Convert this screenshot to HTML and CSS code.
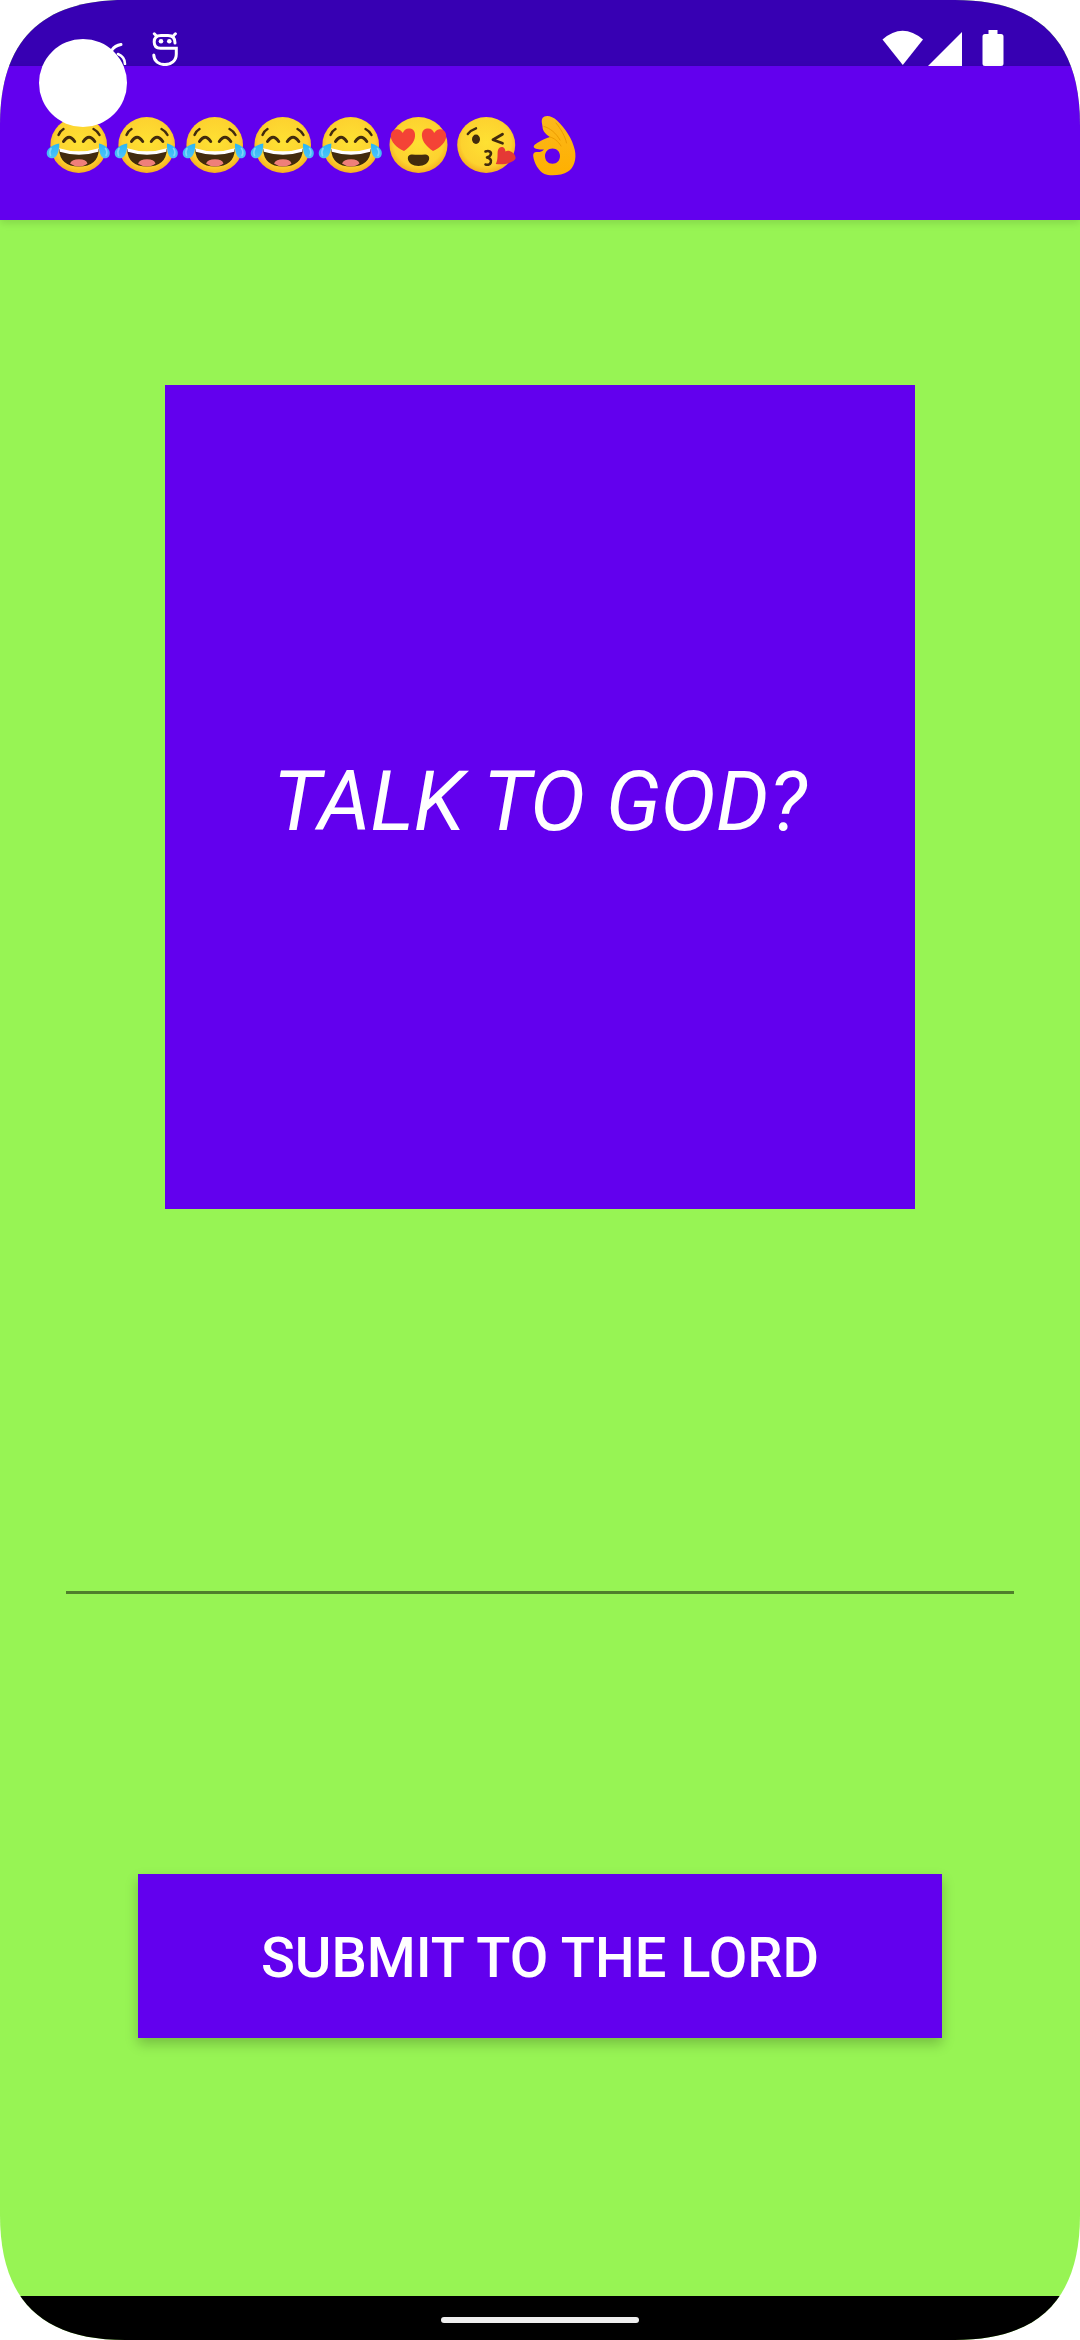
FILE: index.html
```html
<!DOCTYPE html>
<html lang="en">
<head>
<meta charset="utf-8">
<title>Talk to God</title>
<link rel="stylesheet" href="styles.css">
</head>
<body>
<svg class="defs" width="0" height="0" aria-hidden="true">
  <defs>
    <radialGradient id="faceFill" cx="50%" cy="45%" r="55%">
      <stop offset="0" stop-color="#fee133"/>
      <stop offset="0.78" stop-color="#fdd22f"/>
      <stop offset="1" stop-color="#f5ae20"/>
    </radialGradient>
    <linearGradient id="tearFill" x1="0" y1="0" x2="0" y2="1">
      <stop offset="0" stop-color="#29b6f6"/>
      <stop offset="1" stop-color="#4fc3f7"/>
    </linearGradient>
    <linearGradient id="handFill" x1="0" y1="0" x2="0" y2="1">
      <stop offset="0" stop-color="#fbb81c"/>
      <stop offset="1" stop-color="#ffb000"/>
    </linearGradient>
    <symbol id="e-laugh" viewBox="0 0 68 68">
      <ellipse cx="34.7" cy="34" rx="28.3" ry="28" fill="url(#faceFill)"/>
      <path d="M14.5 24 Q16 20 19.5 18M55.5 24 Q53.5 20 49.5 18" fill="none" stroke="#422b0d" stroke-width="2.4" stroke-linecap="round"/>
      <path d="M19.5 30.5 Q25 22 30.7 30.5M39.3 30.5 Q45 22 50.8 30.5" fill="none" stroke="#422b0d" stroke-width="3" stroke-linecap="round"/>
      <path d="M15 38 Q35 44.5 55 38 Q54 55.5 35 55.5 Q16 55.5 15 38Z" fill="#422b0d"/>
      <path d="M15.3 37.2 Q35 43.5 54.7 37.2 L54.2 40.7 Q35 46.7 15.8 40.7Z" fill="#fff"/>
      <path d="M26 52.5 Q28 48.3 35 48.3 Q42 48.3 43.5 52.5 Q40 55.5 35 55.5 Q30 55.5 26 52.5Z" fill="#ef7f7a"/>
      <path d="M15.3 32.5 C9 33.5 2.7 37.5 2.7 42 C2.7 45.5 5.5 47.5 8.5 47.3 C12.5 47 15.5 41 15.3 32.5Z" fill="url(#tearFill)"/>
      <path d="M55 32.5 C60 33.5 65.8 37.5 65.8 42 C65.8 45.5 63.5 47.5 60.5 47.3 C57 47 54.5 41 55 32.5Z" fill="url(#tearFill)"/>
      <path d="M61.5 37.5 Q64 41 62 44.5" fill="none" stroke="#81d4fa" stroke-width="1.6" stroke-linecap="round"/>
      <path d="M7 37.5 Q5 41 6.5 44.5" fill="none" stroke="#81d4fa" stroke-width="1.6" stroke-linecap="round"/>
    </symbol>
    <symbol id="e-hearts" viewBox="0 0 68 68">
      <ellipse cx="34.5" cy="34" rx="29" ry="28" fill="url(#faceFill)"/>
      <path d="M20 40 C13 37 6.5 31 6.8 24.5 C7 20 11 17.5 14.5 18.5 C16.5 19 18 20.5 18.8 22 C19.8 19 22.5 17 26 17.5 C29.5 18 31.5 21 31 25.5 C30.5 31 26 36 20 40Z" fill="#f44336"/>
      <path d="M49 40 C43 36 38.5 31 38 25.5 C37.5 21 39.5 18 43 17.5 C46.5 17 49.2 19 50.2 22 C51 20.5 52.5 19 54.5 18.5 C58 17.5 62 20 62.2 24.5 C62.5 31 56 37 49 40Z" fill="#f44336"/>
      <path d="M23.8 47 C23.8 44.5 26 43.2 28 43.4 Q34.5 44.2 41 43.4 C43 43.2 45.2 44.5 45.2 47 C45.2 52 40 55 34.5 55 C29 55 23.8 52 23.8 47Z" fill="#422b0d"/>
    </symbol>
    <symbol id="e-kiss" viewBox="0 0 68 68">
      <ellipse cx="34.2" cy="34" rx="29" ry="28" fill="url(#faceFill)"/>
      <path d="M15.8 23 Q19 19 24 17.3" fill="none" stroke="#422b0d" stroke-width="2.4" stroke-linecap="round"/>
      <ellipse cx="24" cy="28.3" rx="4" ry="4.7" fill="#422b0d"/>
      <path d="M50.5 23.3 L41 28.8 L50.5 32.3" fill="none" stroke="#422b0d" stroke-width="2.8" stroke-linecap="round" stroke-linejoin="round"/>
      <path d="M33.5 40.5 C37 39 40 41 38.5 44 C37.8 45.8 35.8 46.2 35 46.4 C37 46.8 40 48.5 38.8 51.5 C37.8 54 35 54 33.5 53.5" fill="none" stroke="#422b0d" stroke-width="2.6" stroke-linecap="round" stroke-linejoin="round"/>
      <path d="M43.8 53 C46.5 48 45 42 46 39 C47 36 50.5 35 52.5 37.5 C53 38.2 53.4 39.5 53.5 40.5 C55 39.5 58 39.5 60.5 41.5 C63 43.5 64 46 63.3 48 C60 52.5 51 54 43.8 53Z" fill="#e53935"/>
    </symbol>
    <symbol id="e-ok" viewBox="0 0 68 68">
      <path fill-rule="evenodd" d="M22.5 7 C25 3.5 32 4.5 37 9.5 C45 17 52.5 28 54.8 39 C56.8 48 54 57 48 60.5 C42 64.5 30 65.5 24.5 63 C18.5 60 14 52 13.2 45 C13 42 14.5 40.8 17 41 C20 41.2 22 40.5 24 38.5 C21 38.5 16 38.5 14 36.5 C13 34.5 15.5 33 18 31.5 C22 29 26 27 30 26 C26 23.5 22.5 20 22.5 15.5 C22 12 21 9.5 22.5 7Z M32.5 37.5 C28 37.5 25 41 25 45 C25 49.5 28 52.7 32.5 52.7 C37 52.7 40 49.5 40 45 C40 41 37 37.5 32.5 37.5Z" fill="url(#handFill)"/>
      <path d="M24 15.5 C30 17 36 22 40 29M36 12 C41 18 45 25 46.5 32M30 26 C34 27 38 30 41 35" fill="none" stroke="#ec9c00" stroke-width="1" stroke-linecap="round"/>
    </symbol>
  </defs>
</svg>

<div class="screen">
  <header class="status-bar">
    <div class="status-left">
      <svg class="notif-clipped" width="30" height="30" viewBox="0 0 30 30" aria-hidden="true">
        <path d="M17 9.5 Q11 10.5 8 15" fill="none" stroke="#fff" stroke-width="3" stroke-linecap="round"/>
        <path d="M14 19 Q21 22 21 29" fill="none" stroke="#fff" stroke-width="2.6" stroke-linecap="round"/>
      </svg>
      <svg class="notif-bot" width="26" height="34" viewBox="0 0 26 34" aria-hidden="true">
        <path d="M2.3 1.8 L4.5 4M23.4 1.8 L21.2 4" stroke="#fff" stroke-width="3" stroke-linecap="round"/>
        <path d="M23 11 Q23 3.5 16 3.5 L9 3.5 Q2.2 3.5 2.2 10 Q2.2 16.3 8.5 16.3 L24.3 16.3 L24.3 22 C24.3 29 19 32.6 13 32.6 C7 32.6 1.8 29 1.8 23" fill="none" stroke="#fff" stroke-width="3" stroke-linecap="round"/>
        <circle cx="9" cy="9.3" r="2.3" fill="#fff"/>
        <circle cx="17.3" cy="9.3" r="2.3" fill="#fff"/>
      </svg>
    </div>
    <div class="status-right">
      <svg width="42" height="36" viewBox="0 0 42 36" aria-hidden="true">
        <path d="M0.5 9.5 Q20.5 -8 41 9.5 L20.8 35Z" fill="#fff"/>
      </svg>
      <svg class="sig" width="34" height="36" viewBox="0 0 34 36" aria-hidden="true">
        <path d="M34 2 L34 36 L0 36Z" fill="#fff"/>
      </svg>
      <svg class="bat" width="22" height="36" viewBox="0 0 22 36" aria-hidden="true">
        <path d="M6.5 0 H15.5 V4 H19 Q21.5 4 21.5 6.5 V33.5 Q21.5 36 19 36 H3 Q0.5 36 0.5 33.5 V6.5 Q0.5 4 3 4 H6.5Z" fill="#fff"/>
      </svg>
    </div>
  </header>

  <div class="app-bar">
    <div class="avatar"></div>
    <div class="emoji-row">
      <svg class="emoji"><use href="#e-laugh"/></svg>
      <svg class="emoji"><use href="#e-laugh"/></svg>
      <svg class="emoji"><use href="#e-laugh"/></svg>
      <svg class="emoji"><use href="#e-laugh"/></svg>
      <svg class="emoji"><use href="#e-laugh"/></svg>
      <svg class="emoji"><use href="#e-hearts"/></svg>
      <svg class="emoji"><use href="#e-kiss"/></svg>
      <svg class="emoji"><use href="#e-ok"/></svg>
    </div>
  </div>

  <main class="content">
    <div class="card">TALK TO GOD?</div>
    <div class="field-line"></div>
    <button class="submit" type="button">SUBMIT TO THE LORD</button>
  </main>

  <footer class="nav-bar"><span class="home-pill"></span></footer>
</div>
</body>
</html>
```

FILE: styles.css
```css
* { box-sizing: border-box; }

html, body {
  margin: 0;
  padding: 0;
  background: #fff;
}

.defs { position: absolute; }

.screen {
  width: 1080px;
  height: 2340px;
  display: flex;
  flex-direction: column;
  overflow: hidden;
  position: relative;
  background: #97f454;
  clip-path: path("M0 125 C0 41 41 0 125 0 H955 C1039 0 1080 41 1080 125 V2215 C1080 2299 1039 2340 955 2340 H125 C41 2340 0 2299 0 2215Z");
  font-family: Roboto, "Liberation Sans", sans-serif;
}

.status-bar {
  height: 66px;
  flex: none;
  background: #3700b3;
  display: flex;
  justify-content: space-between;
  align-items: flex-end;
  padding: 0 76px 0 104px;
}

.status-left,
.status-right {
  display: flex;
  align-items: flex-end;
}

.notif-clipped { margin-right: 18px; margin-bottom: 1px; }
.sig { margin-left: 4px; }
.bat { margin-left: 20px; }

.app-bar {
  height: 154px;
  flex: none;
  background: #6200ee;
  padding: 45px 0 0 44px;
  position: relative;
  z-index: 1;
  box-shadow: 0 3px 8px rgba(0, 0, 0, 0.12);
}

.avatar {
  position: absolute;
  left: 39px;
  top: -27px;
  width: 88px;
  height: 88px;
  border-radius: 50%;
  background: #fff;
  z-index: 2;
}

.emoji-row { display: flex; }

.emoji {
  width: 68px;
  height: 68px;
  flex: none;
}

.content {
  flex: 1;
  display: flex;
  flex-direction: column;
  align-items: center;
  padding-top: 165px;
}

.card {
  width: 750px;
  height: 824px;
  padding-top: 8px;
  background: #6200ee;
  color: #fff;
  display: flex;
  align-items: center;
  justify-content: center;
  font-size: 83px;
  font-style: italic;
  font-weight: 400;
}

.field-line {
  width: 948px;
  height: 3px;
  margin-top: 382px;
  background: rgba(0, 0, 0, 0.48);
}

.submit {
  width: 804px;
  height: 164px;
  margin-top: 280px;
  border: 0;
  padding: 4px 0 0;
  background: #6200ee;
  color: #fff;
  font-family: inherit;
  font-size: 56px;
  font-weight: 500;
  box-shadow: 0 6px 12px rgba(0, 0, 0, 0.22);
}

.nav-bar {
  height: 44px;
  flex: none;
  background: #000;
  display: flex;
  justify-content: center;
  padding-top: 21px;
}

.home-pill {
  width: 198px;
  height: 6px;
  border-radius: 3px;
  background: #eee;
}
```
